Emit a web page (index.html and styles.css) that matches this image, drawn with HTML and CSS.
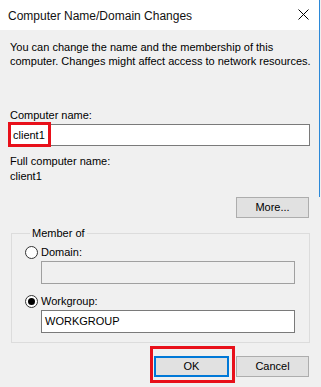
FILE: index.html
```html
<!DOCTYPE html>
<html>
<head>
<meta charset="utf-8">
<link rel="stylesheet" href="styles.css">
</head>
<body>
<div class="window">
  <div class="top">
    <div class="titlebar">
      <span class="title">Computer Name/Domain Changes</span>
      <svg class="close" width="11" height="11" viewBox="0 0 11 11"><path d="M0.5 0.5 L10.5 10.5 M10.5 0.5 L0.5 10.5" stroke="#000" stroke-width="1" fill="none"/></svg>
    </div>
    <p class="intro">You can change the name and the membership of this<br>computer. Changes might affect access to network resources.</p>
    <div class="label label-name">Computer name:</div>
    <div class="field-wrap">
      <div class="textbox">client1</div>
      <div class="highlight highlight-name"></div>
    </div>
    <div class="label label-full">Full computer name:</div>
    <div class="label label-value">client1</div>
  </div>
  <div class="btn btn-more">More...</div>
  <fieldset class="group">
    <legend>Member of</legend>
    <div class="radio-row row-domain"><span class="radio"></span><span>Domain:</span></div>
    <div class="textbox textbox-sub disabled"></div>
    <div class="radio-row row-work"><span class="radio checked"></span><span>Workgroup:</span></div>
    <div class="textbox textbox-sub">WORKGROUP</div>
  </fieldset>
  <div class="actions">
    <div class="ok-wrap">
      <div class="btn btn-ok">OK</div>
      <div class="highlight highlight-ok"></div>
    </div>
    <div class="btn btn-cancel">Cancel</div>
  </div>
</div>
</body>
</html>
```

FILE: styles.css
```css
* { box-sizing: border-box; }
html, body { margin: 0; padding: 0; }
body {
  width: 321px;
  height: 387px;
  overflow: hidden;
  background: #f0f0f0;
}
.window {
  width: 321px;
  height: 387px;
  background: #f0f0f0;
  font-family: "Liberation Sans", Arial, sans-serif;
  font-size: 11px;
  line-height: 13px;
  color: #000;
  display: flex;
  flex-direction: column;
}
.top {
  width: 320px;
  border-right: 1px solid #2b88d8;
  display: flex;
  flex-direction: column;
  padding-bottom: 14px;
}
.titlebar {
  height: 30px;
  background: #fff;
  display: flex;
  align-items: center;
  justify-content: space-between;
  padding: 2px 10px 0 8px;
}
.title {
  font-size: 12px;
  line-height: 28px;
  color: #111;
}
.close {
  display: block;
  margin-top: -3px;
}
.intro {
  margin: 10px 0 0 10px;
  line-height: 14px;
}
.label { margin-left: 10px; }
.label-name { margin-top: 41px; }
.field-wrap {
  position: relative;
  margin: 2px 0 0 9px;
  width: 301px;
}
.textbox {
  height: 22px;
  background: #fff;
  border: 1px solid #7a7a7a;
  padding-left: 3px;
  line-height: 20px;
}
.label-full { margin-top: 9px; }
.label-value { margin-top: 2px; }
.highlight {
  position: absolute;
  border: 3px solid #e8101a;
}
.highlight-name {
  left: -1px;
  top: -2px;
  width: 43px;
  height: 25px;
}
.btn {
  height: 21px;
  background: #e1e1e1;
  border: 1px solid #adadad;
  display: flex;
  align-items: center;
  justify-content: center;
}
.btn-more {
  width: 73px;
  align-self: flex-end;
  margin-right: 12px;
}
.group {
  margin: 9px 11px 0 11px;
  padding: 5px 14px 9px 13px;
  border: 1px solid #dcdcdc;
  min-width: 0;
}
.group legend {
  margin-left: 5px;
  padding: 0 2px;
  line-height: 13px;
}
.radio-row {
  display: flex;
  align-items: center;
  gap: 3px;
  height: 14px;
  line-height: 14px;
}
.row-work { margin-top: 10px; }
.radio {
  width: 13px;
  height: 13px;
  border: 1px solid #333;
  border-radius: 50%;
  background: #fff;
  position: relative;
}
.radio.checked::after {
  content: "";
  position: absolute;
  left: 2px;
  top: 2px;
  width: 7px;
  height: 7px;
  border-radius: 50%;
  background: #000;
}
.textbox-sub {
  margin: 2px 0 0 16px;
  height: 23px;
  line-height: 21px;
}
.textbox.disabled {
  background: #f0f0f0;
  border-color: #a0a0a0;
}
.actions {
  display: flex;
  justify-content: flex-end;
  gap: 7px;
  margin: 13px 12px 0 0;
}
.ok-wrap { position: relative; }
.btn-ok {
  width: 75px;
  border: 2px solid #0078d7;
}
.btn-cancel { width: 73px; }
.highlight-ok {
  left: -4px;
  top: -10px;
  width: 85px;
  height: 37px;
}
```
